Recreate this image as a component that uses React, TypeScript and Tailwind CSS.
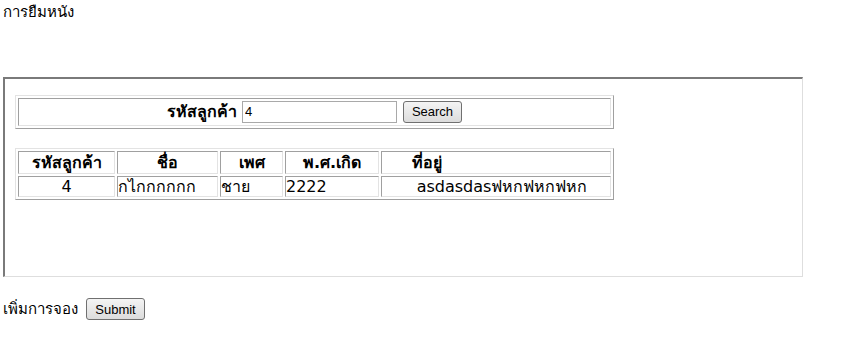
export default function App() {
  const thai = "font-['Tahoma','DejaVu_Sans','Noto_Sans',sans-serif]";
  const btn =
    "h-[22px] px-[7px] rounded-[3px] border border-[#707070] bg-gradient-to-b from-[#f4f4f4] to-[#dcdcdc] text-[13px] font-['Liberation_Sans',Arial,sans-serif] text-black leading-none";
  const cell =
    "border border-t-[#a0a0a0] border-l-[#a0a0a0] border-b-[#e3e3e3] border-r-[#e3e3e3] p-0 leading-[18px] text-[16px]";
  const tbl =
    "border border-t-[#e3e3e3] border-l-[#e3e3e3] border-b-[#a0a0a0] border-r-[#a0a0a0] border-separate border-spacing-[2px] w-[599px]";

  return (
    <div className={`bg-white text-black w-[843px] h-[362px] ${thai}`}>
      <div className="pl-[3px] pt-[2px] text-[15px] leading-[20px]">การยืมหนัง</div>

      <div className="ml-[3px] mt-[55px] w-[800px] h-[200px] border-t-2 border-l-2 border-t-[#7a7a7a] border-l-[#7a7a7a] border-b border-r border-b-[#dedede] border-r-[#dedede] pl-[10px] pt-[16px]">
        <table className={tbl}>
          <tbody>
            <tr>
              <td className={`${cell} h-[28px] text-center`}>
                <div className="flex items-center justify-center gap-[5px] -mt-[1px]">
                  <span className="font-bold">รหัสลูกค้า</span>
                  <input
                    readOnly
                    value="4"
                    className="w-[155px] h-[22px] border border-[#a9a9a9] px-[2px] text-[13px] font-['Liberation_Sans',Arial,sans-serif] outline-none"
                  />
                  <button className={`${btn} ml-[1px] w-[59px]`}>Search</button>
                </div>
              </td>
            </tr>
          </tbody>
        </table>

        <table className={`${tbl} mt-[19px]`}>
          <tbody>
            <tr>
              <th className={`${cell} h-[23px] font-bold w-[97px]`}>รหัสลูกค้า</th>
              <th className={`${cell} h-[23px] font-bold w-[101px]`}>ชื่อ</th>
              <th className={`${cell} h-[23px] font-bold w-[63px]`}>เพศ</th>
              <th className={`${cell} h-[23px] font-bold w-[94px]`}>พ.ศ.เกิด</th>
              <th className={`${cell} h-[23px] font-bold text-left pl-[30px]`}>ที่อยู่</th>
            </tr>
            <tr>
              <td className={`${cell} h-[21px] text-center`}>4</td>
              <td className={cell}>กไกกกกกก</td>
              <td className={cell}>ชาย</td>
              <td className={cell}>2222</td>
              <td className={`${cell} text-center pl-[12px]`}>asdasdasฟหกฟหกฟหก</td>
            </tr>
          </tbody>
        </table>
      </div>

      <div className="flex items-center gap-[8px] pl-[3px] mt-[21px]">
        <span className="text-[15px]">เพิ่มการจอง</span>
        <button className={`${btn} w-[59px]`}>Submit</button>
      </div>
    </div>
  );
}
